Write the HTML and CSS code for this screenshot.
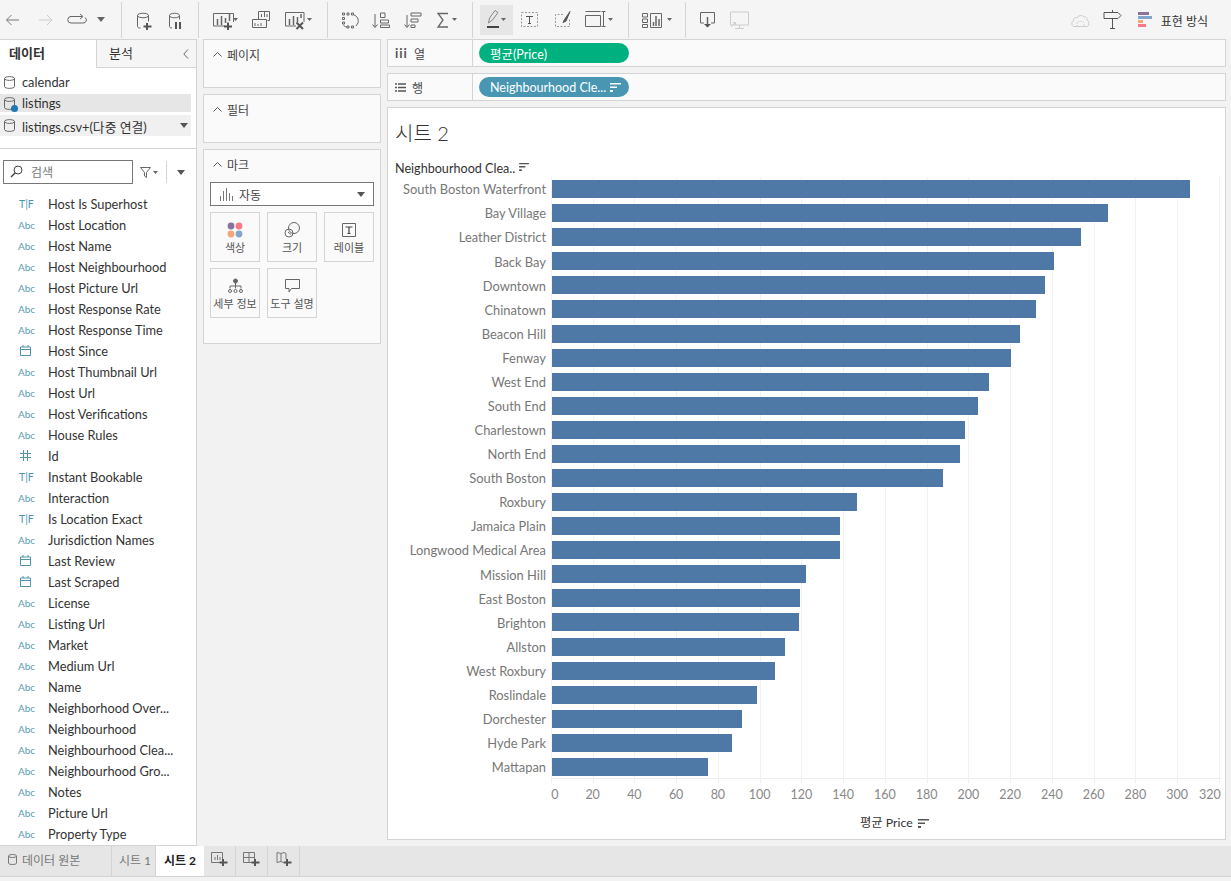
FILE: index.html
```html
<!DOCTYPE html>
<html lang="ko">
<head>
<meta charset="utf-8">
<title>시트 2</title>
<link rel="stylesheet" href="styles.css">
</head>
<body>
<div class="app">
  <header class="toolbar">
    <svg class="tools" width="122" height="36" viewBox="0 2 121 36" fill="none" stroke="#777">
      <path d="M19 20H6.500M11.500 15l-5 5 5 5"/>
      <path d="M39 20h13M47 15l5 5-5 5" stroke="#ccc"/>
      <path d="M74 16.500h-3a3 3 0 0 0 0 6.500h12a3 3 0 0 0 2-5.500M70 16.500h12M80 14l3 2.500-3 2.500" stroke="#666"/>
      <path d="M97 17h8l-4 5z" fill="#666" stroke="none"/>
    </svg>
    <svg class="tools" width="77" height="36" viewBox="122 2 76 36" fill="none" stroke="#666">
      <path d="M137.500 15.500c0-3 11-3 11 0v6M137.500 15.500c0 3 11 3 11 0M137.500 15.500v11c0 1 1 1.500 3 1.500"/>
      <path d="M147 23v7M143.500 26.500h8" stroke="#555" stroke-width="2"/>
      <path d="M169.500 15.500c0-3 10-3 10 0v4M169.500 15.500c0 3 10 3 10 0M169.500 15.500v11c0 1 1 1.500 2.500 1.500"/>
      <path d="M176 22v7M180 22v7" stroke="#555" stroke-width="2"/>
    </svg>
    <svg class="tools" width="129" height="36" viewBox="199 2 128 36" fill="none" stroke="#666">
      <path d="M225 26h-11.500V13.500h20V22"/>
      <path d="M217.500 25v-6M221.500 25v-9M225.500 23v-5M229.500 21v-7" stroke-width="1.500"/>
      <path d="M228 22.500v7.500M224 26.500h8" stroke="#555" stroke-width="2"/>
      <path d="M233 18h5l-2.500 3z" fill="#666" stroke="none"/>
      <path d="M258.500 19.500v-8h11v9h-2M252.500 19.500h14v8h-14z"/>
      <path d="M261.500 17v-3M264.500 17v-5M267 17v-3M255 26v-3M258 26v-2M261 26v-3" />
      <path d="M304 22v-9.500h-18.500V26H296"/>
      <path d="M289.500 25v-6M293.500 25v-9M297.500 22v-5M301 18v-4" stroke-width="1.500"/>
      <path d="M296.500 22.500l6.500 6.500M303 22.500l-6.500 6.500" stroke="#555" stroke-width="2"/>
      <path d="M307 18h5l-2.500 3z" fill="#666" stroke="none"/>
    </svg>
    <svg class="tools" width="145" height="36" viewBox="328 2 144 36" fill="none" stroke="#666">
      <path d="M342.500 13h2v2h-2zM347 13h2v2h-2zM351.500 13h2v2h-2zM342.500 17.500h2v2h-2zM342.500 22h2v2h-2zM347 26h2v2h-2zM351.500 26h2v2h-2z"/>
      <path d="M354 15c3 1 5 4 4 8M358 23l-2 3M347 27c-2 0-3-1-3.500-2"/>
      <path d="M375 14v13M372.500 24.500l2.500 3 2.500-3"/>
      <path d="M380.500 13h4.500v4.500h-4.500zM380.500 20h8v3h-8zM380.500 25h9v2.500h-9z" />
      <path d="M407 15v12M404.500 24.500l2.500 3 2.500-3"/>
      <path d="M411 13h10v3h-10zM411 19h7v3h-7zM411 25h4v2.500h-4z"/>
      <path d="M448 13.500h-10l5 6.500-5 7h10" stroke-width="1.300"/>
      <path d="M452 18h5l-2.500 3z" fill="#666" stroke="none"/>
    </svg>
    <svg class="tools" width="156" height="36" viewBox="473 2 155 36" fill="none" stroke="#666">
      <rect x="480" y="5" width="33" height="30" fill="#e6e6e6" stroke="none"/>
      <path d="M488.500 23l1-5 5.500-7.500 3 2-5.500 7.500z" stroke="#888"/>
      <path d="M487 27h12" stroke="#444" stroke-width="2"/>
      <path d="M501 18h5l-2.500 3z" fill="#666" stroke="none"/>
      <rect x="521.500" y="12.500" width="16" height="14" stroke="#999" stroke-dasharray="2 1.500"/>
      <path d="M526 16.500h7M529.500 16.500v7M528 23.500h3" stroke="#555"/>
      <path d="M563 14.500h-7.500v12h14v-8" stroke="#999" stroke-dasharray="2 1.500"/>
      <path d="M570 11.500l-5.500 8-1.500 3 3-1.500z" fill="#555" stroke="#555"/>
      <path d="M585.500 11.500h15M585.500 15.500h15v11h-15zM603.500 11.500v15M601.500 11.500h4M601.500 26.500h4"/>
      <path d="M608 18h5l-2.500 3z" fill="#666" stroke="none"/>
    </svg>
    <svg class="tools" width="57" height="36" viewBox="629 2 56 36" fill="none" stroke="#666">
      <path d="M642.500 13.500h5v3.500h-5zM642.500 19h5v3.500h-5zM642.500 24.500h5v3h-5z"/>
      <path d="M650.500 13.500h11v14h-11z"/>
      <path d="M653.500 26v-4M656 26v-10M659 26v-7" stroke-width="1.500"/>
      <path d="M667 18h5l-2.500 3z" fill="#666" stroke="none"/>
    </svg>
    <svg class="tools tools-last" width="70" height="36" viewBox="686 2 70 36" fill="none" stroke="#666">
      <path d="M704 23h-3.500v-10.500h14V23H711"/>
      <path d="M707.500 17v9.500" stroke-width="1.500"/>
      <path d="M704 24h7l-3.500 3.500z" fill="#555" stroke="none"/>
      <path d="M730.500 12h18v13h-18zM739.500 25v3M735 28.500h9" stroke="#ccc"/>
      <path d="M731 27l4-4M733 22.500h2.500V25" stroke="#ccc"/>
    </svg>
    <div class="toolbar-right">
      <svg width="19" height="16" viewBox="0 0 19 16" fill="none" stroke="#ccc">
        <path d="M2.500 14.500C0 13 .5 9.500 2.500 9c-.5-2.500 2-4 3.500-3 .5-2.500 5.500-3.500 7-1 2-.5 3.500 1 3 3 2.500 1 2.500 5 .5 6.500z"/>
        <path d="M6 14.500v-3c0-3 7-3 7 0v3" stroke-dasharray="1.500 1"/>
      </svg>
      <svg class="sign" width="19" height="19" viewBox="0 0 19 19" fill="none" stroke="#555">
        <path d="M1 2.500h14l3 3-3 3H1zM9.500 0v2.500M9.500 8.500v10M7 18.500h5"/>
      </svg>
      <div class="showme">
        <span class="sm-bar sm-purple"></span>
        <span class="sm-bar sm-blue"></span>
        <span class="sm-bar sm-orange"></span>
        <span class="sm-bar sm-pink"></span>
      </div>
      <span class="showme-label">표현 방식</span>
    </div>
  </header>

  <div class="workspace">
    <aside class="data-pane">
      <div class="pane-tabs">
        <div class="pane-tab active">데이터</div>
        <div class="pane-tab">분석
          <svg class="collapse" width="6" height="10" viewBox="0 0 6 10" fill="none" stroke="#666"><path d="M5 .5L.8 5 5 9.500"/></svg>
        </div>
      </div>
      <div class="sources">
        <div class="source">
          <svg class="cyl" width="11" height="13" viewBox="0 0 11 13" fill="none" stroke="#666"><path d="M.5 2.500c0-2.500 10-2.500 10 0v8c0 2.500-10 2.500-10 0zM.5 2.500c0 2.500 10 2.500 10 0"/></svg>
          calendar
        </div>
        <div class="source selected">
          <span class="cyl-wrap">
            <svg class="cyl" width="11" height="13" viewBox="0 0 11 13" fill="none" stroke="#666"><path d="M.5 2.500c0-2.500 10-2.500 10 0v8c0 2.500-10 2.500-10 0zM.5 2.500c0 2.500 10 2.500 10 0"/></svg>
            <span class="live-dot"></span>
          </span>
          listings
        </div>
        <div class="source blend">
          <svg class="cyl" width="11" height="13" viewBox="0 0 11 13" fill="none" stroke="#666"><path d="M.5 2.500c0-2.500 10-2.500 10 0v8c0 2.500-10 2.500-10 0zM.5 2.500c0 2.500 10 2.500 10 0"/></svg>
          <span class="source-name">listings.csv+(다중 연결)</span>
          <span class="tri"></span>
        </div>
      </div>
      <div class="searchbar">
        <div class="searchbox">
          <svg width="13" height="13" viewBox="0 0 13 13" fill="none" stroke="#444"><circle cx="8" cy="5" r="4"/><path d="M5 8l-4 4" stroke-width="1.400"/></svg>
          <span>검색</span>
        </div>
        <svg class="filter" width="18" height="11" viewBox="0 0 18 11" fill="none" stroke="#666"><path d="M.5.500h10L6.500 5.500v5l-2-1.500V5.500z"/><path d="M13 4h5l-2.500 3z" fill="#666" stroke="none"/></svg>
        <span class="search-sep"></span>
        <span class="tri"></span>
      </div>
      <ul class="fields">
        <li><span class="ty tf">T|F</span>Host Is Superhost</li>
        <li><span class="ty">Abc</span>Host Location</li>
        <li><span class="ty">Abc</span>Host Name</li>
        <li><span class="ty">Abc</span>Host Neighbourhood</li>
        <li><span class="ty">Abc</span>Host Picture Url</li>
        <li><span class="ty">Abc</span>Host Response Rate</li>
        <li><span class="ty">Abc</span>Host Response Time</li>
        <li><span class="ty"><svg width="11" height="11" viewBox="0 0 11 11" fill="none" stroke="#4f94ad"><path d="M.5 2h10v8.500H.5zM.5 4.500h10M3 0v2M8 0v2"/></svg></span>Host Since</li>
        <li><span class="ty">Abc</span>Host Thumbnail Url</li>
        <li><span class="ty">Abc</span>Host Url</li>
        <li><span class="ty">Abc</span>Host Verifications</li>
        <li><span class="ty">Abc</span>House Rules</li>
        <li><span class="ty"><svg width="11" height="11" viewBox="0 0 11 11" fill="none" stroke="#4f94ad"><path d="M3.500 0v11M7.500 0v11M0 3.500h11M0 7.500h11"/></svg></span>Id</li>
        <li><span class="ty tf">T|F</span>Instant Bookable</li>
        <li><span class="ty">Abc</span>Interaction</li>
        <li><span class="ty tf">T|F</span>Is Location Exact</li>
        <li><span class="ty">Abc</span>Jurisdiction Names</li>
        <li><span class="ty"><svg width="11" height="11" viewBox="0 0 11 11" fill="none" stroke="#4f94ad"><path d="M.5 2h10v8.500H.5zM.5 4.500h10M3 0v2M8 0v2"/></svg></span>Last Review</li>
        <li><span class="ty"><svg width="11" height="11" viewBox="0 0 11 11" fill="none" stroke="#4f94ad"><path d="M.5 2h10v8.500H.5zM.5 4.500h10M3 0v2M8 0v2"/></svg></span>Last Scraped</li>
        <li><span class="ty">Abc</span>License</li>
        <li><span class="ty">Abc</span>Listing Url</li>
        <li><span class="ty">Abc</span>Market</li>
        <li><span class="ty">Abc</span>Medium Url</li>
        <li><span class="ty">Abc</span>Name</li>
        <li><span class="ty">Abc</span>Neighborhood Over...</li>
        <li><span class="ty">Abc</span>Neighbourhood</li>
        <li><span class="ty">Abc</span>Neighbourhood Clea...</li>
        <li><span class="ty">Abc</span>Neighbourhood Gro...</li>
        <li><span class="ty">Abc</span>Notes</li>
        <li><span class="ty">Abc</span>Picture Url</li>
        <li><span class="ty">Abc</span>Property Type</li>
      </ul>
    </aside>

    <section class="cards">
      <div class="card card-short">
        <div class="card-title"><svg width="9" height="5" viewBox="0 0 9 5" fill="none" stroke="#555"><path d="M.5 4.500l4-4 4 4"/></svg>페이지</div>
      </div>
      <div class="card card-short">
        <div class="card-title"><svg width="9" height="5" viewBox="0 0 9 5" fill="none" stroke="#555"><path d="M.5 4.500l4-4 4 4"/></svg>필터</div>
      </div>
      <div class="card card-marks">
        <div class="card-title"><svg width="9" height="5" viewBox="0 0 9 5" fill="none" stroke="#555"><path d="M.5 4.500l4-4 4 4"/></svg>마크</div>
        <div class="mark-select">
          <svg width="13" height="13" viewBox="0 0 13 13" fill="none" stroke="#777"><path d="M.5 13V8M3.500 13V3M6.500 13V0M9.500 13V5M12.500 13V8"/></svg>
          <span class="mark-select-label">자동</span>
          <span class="tri"></span>
        </div>
        <div class="mark-grid">
          <div class="mark-btn">
            <svg width="16" height="16" viewBox="0 0 16 16"><circle cx="4" cy="4" r="3.400" fill="#8a729f"/><circle cx="12" cy="4" r="3.400" fill="#f97a85"/><circle cx="4" cy="12" r="3.400" fill="#f5a67a"/><circle cx="12" cy="12" r="3.400" fill="#84a5cc"/></svg>
            <span>색상</span>
          </div>
          <div class="mark-btn">
            <svg width="16" height="16" viewBox="0 0 16 16" fill="none" stroke="#666"><circle cx="10" cy="6" r="5.500"/><circle cx="5" cy="11" r="4"/><path d="M4 10l3 2.500"/></svg>
            <span>크기</span>
          </div>
          <div class="mark-btn">
            <svg width="14" height="14" viewBox="0 0 14 14" fill="none" stroke="#666"><path d="M.5.500h13v13H.5z"/><path d="M3.500 4h7M7 4v6.500M5.500 10.500h3" stroke="#444" stroke-width="1.200"/></svg>
            <span>레이블</span>
          </div>
          <div class="mark-btn">
            <svg width="15" height="15" viewBox="0 0 15 15" fill="none" stroke="#666"><circle cx="7.500" cy="2.500" r="2" fill="#666"/><path d="M7.500 4.500v3M2 10V7.500h11V10M7.500 7.500V10"/><circle cx="2" cy="12.500" r="1.500"/><circle cx="7.500" cy="12.500" r="1.500"/><circle cx="13" cy="12.500" r="1.500"/></svg>
            <span>세부 정보</span>
          </div>
          <div class="mark-btn">
            <svg width="15" height="14" viewBox="0 0 15 14" fill="none" stroke="#666"><path d="M.5.500h14v9H6.500L4 13V9.500H.5z"/></svg>
            <span>도구 설명</span>
          </div>
        </div>
      </div>
    </section>

    <main class="main">
      <div class="shelf">
        <div class="shelf-label"><span class="shelf-cols">iii</span>열</div>
        <div class="pill pill-green">평균(Price)</div>
      </div>
      <div class="shelf">
        <div class="shelf-label">
          <svg width="11" height="9" viewBox="0 0 11 9" fill="none" stroke="#555"><path d="M0 1h2M3 1h8M0 4.500h2M3 4.500h8M0 8h2M3 8h8" stroke-width="1.500"/></svg>
          행
        </div>
        <div class="pill pill-blue">
          <span class="pill-text">Neighbourhood Cle...</span>
          <svg width="11" height="9" viewBox="0 0 11 9" fill="#fff"><path d="M0 0h11v1.500H0zM0 3.500h7V5H0zM0 7h3v2H0z"/></svg>
        </div>
      </div>
      <div class="view">
        <h1 class="sheet-title">시트 2</h1>
        <div class="col-head">Neighbourhood Clea..
          <svg width="10" height="8" viewBox="0 0 11 9" fill="#555"><path d="M0 0h11v1.500H0zM0 3.500h7V5H0zM0 7h3v2H0z"/></svg>
        </div>
        <div class="plot">
          <div class="row"><span class="lbl">South Boston Waterfront</span><span class="bar" style="width:638px"></span></div>
          <div class="row"><span class="lbl">Bay Village</span><span class="bar" style="width:556px"></span></div>
          <div class="row"><span class="lbl">Leather District</span><span class="bar" style="width:529px"></span></div>
          <div class="row"><span class="lbl">Back Bay</span><span class="bar" style="width:502px"></span></div>
          <div class="row"><span class="lbl">Downtown</span><span class="bar" style="width:493px"></span></div>
          <div class="row"><span class="lbl">Chinatown</span><span class="bar" style="width:484px"></span></div>
          <div class="row"><span class="lbl">Beacon Hill</span><span class="bar" style="width:468px"></span></div>
          <div class="row"><span class="lbl">Fenway</span><span class="bar" style="width:459px"></span></div>
          <div class="row"><span class="lbl">West End</span><span class="bar" style="width:437px"></span></div>
          <div class="row"><span class="lbl">South End</span><span class="bar" style="width:426px"></span></div>
          <div class="row"><span class="lbl">Charlestown</span><span class="bar" style="width:413px"></span></div>
          <div class="row"><span class="lbl">North End</span><span class="bar" style="width:408px"></span></div>
          <div class="row"><span class="lbl">South Boston</span><span class="bar" style="width:391px"></span></div>
          <div class="row"><span class="lbl">Roxbury</span><span class="bar" style="width:305px"></span></div>
          <div class="row"><span class="lbl">Jamaica Plain</span><span class="bar" style="width:288px"></span></div>
          <div class="row"><span class="lbl">Longwood Medical Area</span><span class="bar" style="width:288px"></span></div>
          <div class="row"><span class="lbl">Mission Hill</span><span class="bar" style="width:254px"></span></div>
          <div class="row"><span class="lbl">East Boston</span><span class="bar" style="width:248px"></span></div>
          <div class="row"><span class="lbl">Brighton</span><span class="bar" style="width:247px"></span></div>
          <div class="row"><span class="lbl">Allston</span><span class="bar" style="width:233px"></span></div>
          <div class="row"><span class="lbl">West Roxbury</span><span class="bar" style="width:223px"></span></div>
          <div class="row"><span class="lbl">Roslindale</span><span class="bar" style="width:205px"></span></div>
          <div class="row"><span class="lbl">Dorchester</span><span class="bar" style="width:190px"></span></div>
          <div class="row"><span class="lbl">Hyde Park</span><span class="bar" style="width:180px"></span></div>
          <div class="row"><span class="lbl">Mattapan</span><span class="bar" style="width:156px"></span></div>
        </div>
        <div class="axis">
          <span class="tick tick-first">0</span><span class="tick">20</span><span class="tick">40</span><span class="tick">60</span><span class="tick">80</span><span class="tick">100</span><span class="tick">120</span><span class="tick">140</span><span class="tick">160</span><span class="tick">180</span><span class="tick">200</span><span class="tick">220</span><span class="tick">240</span><span class="tick">260</span><span class="tick">280</span><span class="tick">300</span><span class="tick tick-last">320</span>
        </div>
        <div class="axis-title">평균 Price
          <svg width="11" height="9" viewBox="0 0 11 9" fill="#555"><path d="M0 0h11v1.500H0zM0 3.500h7V5H0zM0 7h3v2H0z"/></svg>
        </div>
      </div>
    </main>
  </div>

  <nav class="sheet-tabs">
    <div class="stab stab-source">
      <svg width="9" height="11" viewBox="0 0 9 11" fill="none" stroke="#777"><path d="M.5 2c0-2 8-2 8 0v7c0 2-8 2-8 0zM.5 2c0 2 8 2 8 0"/></svg>
      데이터 원본
    </div>
    <div class="stab stab-sheet1">시트 1</div>
    <div class="stab stab-active">시트 2</div>
    <div class="stab stab-new">
      <svg width="18" height="15" viewBox="0 0 18 15" fill="none" stroke="#777"><path d="M9 10.500H.5V.500h11V7"/><path d="M4 8V5M6.500 8V3M9 8V5"/><path d="M12 7v7M8.500 10.500h8" stroke="#555" stroke-width="2"/></svg>
    </div>
    <div class="stab stab-new">
      <svg width="18" height="15" viewBox="0 0 18 15" fill="none" stroke="#777"><path d="M9 10.500H.5V.500h11V7M.5 5.500h11M6 .500v10"/><path d="M12 7v7M8.500 10.500h8" stroke="#555" stroke-width="2"/></svg>
    </div>
    <div class="stab stab-new">
      <svg width="16" height="15" viewBox="0 0 16 15" fill="none" stroke="#777"><path d="M7 10.500L5 9.500l-4 1V.500l4 1 3-1 2 1V7M5 1.500v8"/><path d="M11 7v7M7.500 10.500h8" stroke="#555" stroke-width="2"/></svg>
    </div>
  </nav>
  <div class="statusbar"></div>
</div>
</body>
</html>
```
FILE: styles.css
```css
* { box-sizing: border-box; }
html, body { margin: 0; padding: 0; height: 100%; overflow: hidden; }
body {
  font-family: "Lato", "Noto Sans CJK KR", sans-serif;
  font-size: 13px;
  color: #333;
  background: #f2f2f2;
}
.app { display: flex; flex-direction: column; width: 1231px; height: 881px; }

.toolbar {
  display: flex;
  flex: 0 0 39px;
  height: 39px;
  background: #f5f5f5;
}
.tools { display: block; flex: none; border-right: 1px solid #d4d4d4; height: 36px; margin-top: 2px; }
.tools-last { border-right: 0; }
.toolbar-right {
  flex: 1;
  display: flex;
  align-items: center;
  justify-content: flex-end;
  padding-right: 23px;
}
.sign { margin-left: 13px; }
.showme { display: flex; flex-direction: column; gap: 1px; width: 14px; margin-left: 16px; }
.sm-bar { display: block; height: 3px; }
.sm-purple { width: 11px; background: #8a729f; }
.sm-blue { width: 14px; background: #84a5cc; }
.sm-orange { width: 5px; background: #f5a67a; }
.sm-pink { width: 8px; background: #f97a85; }
.showme-label { margin-left: 9px; font-size: 12px; line-height: 16px; padding-top: 4px; }

.workspace { flex: 0 0 807px; height: 807px; display: flex; }

.data-pane {
  flex: 0 0 197px;
  width: 197px;
  background: #fff;
  border-top: 1px solid #d4d4d4;
  border-right: 1px solid #d4d4d4;
  border-bottom: 1px solid #d4d4d4;
  display: flex;
  flex-direction: column;
  overflow: hidden;
}
.pane-tabs { display: flex; flex: 0 0 27px; }
.pane-tab { font-size: 13px; line-height: 27px; position: relative; }
.pane-tab.active { width: 97px; padding-left: 9px; font-weight: 700; border-right: 1px solid #d4d4d4; }
.pane-tab:not(.active) {
  flex: 1;
  padding-left: 12px;
  background: #f5f5f5;
  border-bottom: 1px solid #d4d4d4;
  display: flex;
  align-items: center;
  justify-content: space-between;
  padding-right: 7px;
}
.sources { height: 81px; padding-top: 5px; border-bottom: 1px solid #d4d4d4; margin-bottom: 11px; flex: none; }
.source {
  display: flex;
  align-items: center;
  gap: 7px;
  height: 18px;
  width: 191px;
  padding-left: 4px;
  font-size: 12.800px;
}
.source.selected { background: #e6e6e6; margin-top: 3px; }
.source.blend { background: #f0f0f0; height: 21px; margin-top: 3px; }
.source-name { flex: 1; padding-top: 2px; }
.blend .tri { margin-right: 3px; }
.cyl { display: block; flex: none; }
.cyl-wrap { position: relative; display: block; width: 11px; height: 13px; }
.live-dot {
  position: absolute;
  right: -3px;
  bottom: -2px;
  width: 7px;
  height: 7px;
  border-radius: 50%;
  background: #1f77b4;
}
.tri {
  display: block;
  width: 0;
  height: 0;
  border-left: 4px solid transparent;
  border-right: 4px solid transparent;
  border-top: 5px solid #555;
  flex: none;
}
.searchbar { display: flex; align-items: center; flex: 0 0 24px; padding-left: 3px; }
.searchbox {
  display: flex;
  align-items: center;
  gap: 8px;
  width: 130px;
  height: 24px;
  border: 1px solid #777;
  padding: 0 0 2px 6px;
  font-size: 12px;
  color: #777;
}
.filter { margin-left: 7px; }
.search-sep { width: 1px; height: 22px; background: #d4d4d4; margin: 0 10px 0 8px; }
.fields { list-style: none; margin: 9px 0 0; padding: 0; flex: 1; overflow: hidden; }
.fields li { display: flex; align-items: center; height: 21px; white-space: nowrap; font-size: 12.800px; color: #333; }
.ty {
  flex: 0 0 48px;
  padding-left: 18px;
  font-size: 10px;
  color: #5b9cb5;
  display: flex;
  align-items: center;
}
.ty.tf { padding-left: 19px; font-size: 10.500px; color: #4f94ad; }
.ty svg { display: block; margin-left: 2px; }

.cards { flex: 0 0 190px; width: 190px; padding: 0 6px; display: flex; flex-direction: column; gap: 6px; }
.card { background: #fafafa; border: 1px solid #d4d4d4; }
.card-short { height: 49px; }
.card-marks { height: 195px; }
.card-title { display: flex; align-items: center; gap: 5px; height: 28px; padding-left: 9px; font-size: 12px; color: #444; }
.mark-select {
  display: flex;
  align-items: center;
  margin: 4px 0 0 6px;
  width: 164px;
  height: 24px;
  border: 1px solid #777;
  padding: 0 8px 0 9px;
  background: #fff;
}
.mark-select-label { flex: 1; margin-left: 6px; font-size: 12px; color: #444; }
.mark-grid {
  display: grid;
  grid-template-columns: repeat(3, 50px);
  grid-auto-rows: 50px;
  column-gap: 7px;
  row-gap: 6px;
  margin: 6px 0 0 6px;
}
.mark-btn {
  display: flex;
  flex-direction: column;
  align-items: center;
  justify-content: flex-start;
  border: 1px solid #d4d4d4;
  font-size: 11px;
  color: #555;
  padding-top: 9px;
}
.mark-btn svg { flex: 0 0 16px; display: block; }
.mark-btn span { margin-top: 2px; white-space: nowrap; line-height: 16px; }

.main { flex: 0 0 839px; width: 839px; display: flex; flex-direction: column; gap: 6px; }
.shelf {
  display: flex;
  align-items: center;
  height: 28px;
  background: #fafafa;
  border: 1px solid #d4d4d4;
}
.shelf-label {
  width: 85px;
  height: 100%;
  border-right: 1px solid #d4d4d4;
  display: flex;
  align-items: center;
  gap: 6px;
  padding-left: 7px;
  font-size: 12px;
  color: #444;
}
.shelf-cols { font-weight: 700; font-size: 13px; letter-spacing: 1px; color: #555; }
.pill {
  display: flex;
  align-items: center;
  width: 150px;
  height: 20px;
  margin-left: 6px;
  padding-left: 11px;
  border-radius: 10px;
  color: #fff;
  font-size: 12.500px;
}
.pill-green { background: #00b180; }
.pill-blue { background: #4996b2; }
.pill-text { margin-right: 4px; white-space: nowrap; }

.view {
  flex: 1;
  background: #fff;
  border: 1px solid #d4d4d4;
  display: flex;
  flex-direction: column;
  margin-bottom: 6px;
}
.sheet-title { margin: 12px 0 0 7px; font-size: 20px; font-weight: 300; line-height: 26px; color: #333; height: 26px; }
.col-head {
  display: flex;
  align-items: flex-start;
  gap: 4px;
  margin: 15px 0 0 7px;
  height: 16px;
  line-height: 16px;
  font-size: 12.600px;
  color: #333;
}
.col-head svg { margin-top: 2px; }
.plot {
  height: 602px;
  background-image:
    linear-gradient(#efefef, #efefef),
    repeating-linear-gradient(to right, #f2f2f2 0, #f2f2f2 1px, transparent 1px, transparent 41.750px);
  background-position: 164px 100%, 163px 0;
  background-size: 670px 1px, 672px 100%;
  background-repeat: no-repeat;
}
.row { display: flex; align-items: center; height: 24.080px; }
.lbl { flex: 0 0 164px; padding: .5px 6px 0 0; text-align: right; font-size: 12.900px; color: #777; white-space: nowrap; }
.bar { display: block; height: 18px; background: #4e79a7; }
.axis {
  display: flex;
  margin-left: 142px;
  padding-top: 7px;
  height: 25px;
  background-image: repeating-linear-gradient(to right, #f0f0f0 0, #f0f0f0 1px, transparent 1px, transparent 41.750px);
  background-position: 21px 0;
  background-size: 672px 4px;
  background-repeat: no-repeat;
}
.tick { flex: 0 0 41.750px; text-align: center; font-size: 12.500px; line-height: 18px; color: #888; white-space: nowrap; }
.tick-first { padding-left: 8px; }
.tick-last { padding-right: 18px; }
.axis-title {
  display: flex;
  align-items: center;
  gap: 5px;
  margin: 11px 0 0 472px;
  font-size: 12.300px;
  line-height: 16px;
  color: #333;
}

.sheet-tabs {
  flex: 0 0 31px;
  display: flex;
  background: #e6e6e6;
  border-bottom: 1px solid #d4d4d4;
  font-size: 12px;
  color: #777;
}
.stab { display: flex; align-items: center; justify-content: center; border-right: 1px solid #d4d4d4; flex: none; padding-bottom: 4px; }
.stab-source { width: 112px; gap: 5px; justify-content: flex-start; padding-left: 8px; }
.stab-sheet1 { width: 44px; padding-left: 3px; }
.stab-active { width: 48px; background: #fff; color: #222; font-weight: 700; border-right: 0; }
.stab-new { width: 32px; }
.statusbar { flex: 1; background: #f2f2f2; }
```
